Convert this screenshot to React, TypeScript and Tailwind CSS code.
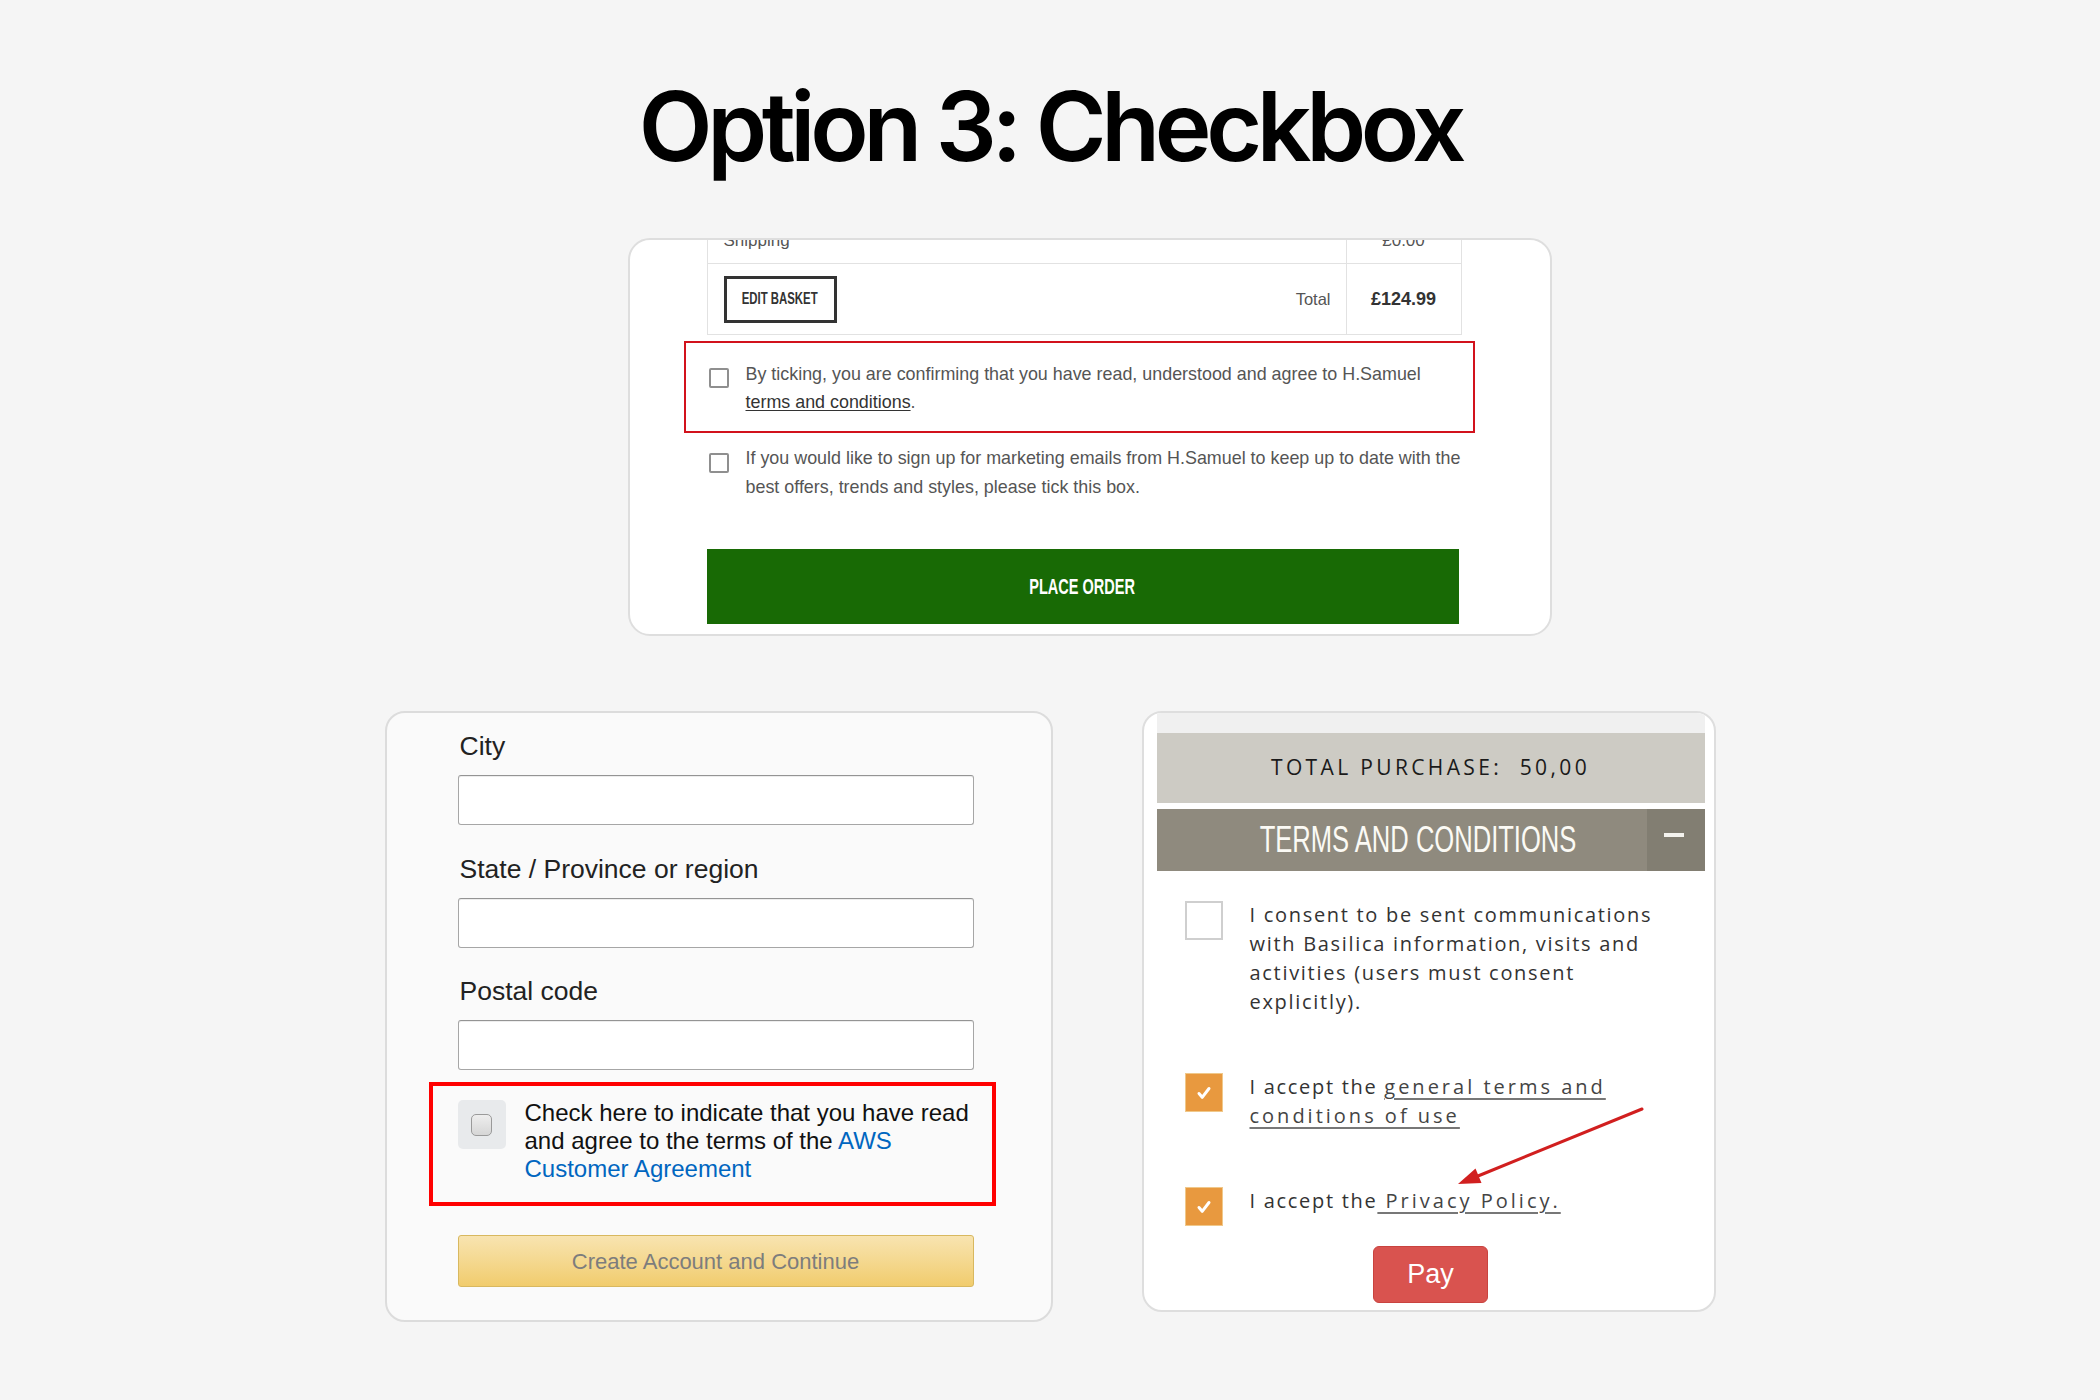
import type { ReactNode } from "react";

const sans = "font-['Liberation_Sans',Arial,sans-serif]";
const openSans = "font-['Open_Sans','Noto_Sans',sans-serif]";

function Condensed({ children, className }: { children: ReactNode; className?: string }) {
  // squeezed caps used for the shop buttons and the accordion header
  return <span className={`inline-block whitespace-nowrap ${className ?? ""}`}>{children}</span>;
}

function OrderCard() {
  return (
    <section className="ml-[243px] h-[398px] w-[924px] overflow-hidden rounded-[22px] border-2 border-[#dedede] bg-white">
      <div className={`-mt-[29px] ml-[77px] w-[755px] ${sans}`}>
        <div className="border-x border-b border-[#e2e2e2]">
          <div className="flex h-[53px] border-b border-[#e2e2e2]">
            <div className="flex flex-1 items-center pl-[16px] pt-[8px] text-[17px] text-[#555]">Shipping</div>
            <div className="flex w-[115px] items-center justify-center border-l border-[#e2e2e2] pt-[8px] text-[17px] text-[#555]">
              £0.00
            </div>
          </div>
          <div className="flex h-[70px]">
            <div className="flex flex-1 items-center justify-between pl-[16px] pr-[15px]">
              <div className="flex h-[47px] w-[113px] items-center justify-center border-[3px] border-[#333]">
                <Condensed className="scale-x-[0.67] text-[17px] font-bold text-[#333]">EDIT BASKET</Condensed>
              </div>
              <span className="text-[16.5px] text-[#555]">Total</span>
            </div>
            <div className="flex w-[115px] items-center justify-center border-l border-[#e2e2e2] text-[18px] font-bold text-[#333]">
              £124.99
            </div>
          </div>
        </div>

        <div className="-ml-[23px] mt-[6px] h-[92px] w-[791px] border-2 border-[#d2121c] pl-[23px] pt-[17px]">
          <div className="flex gap-[17px]">
            <span className="mt-[8px] h-[20px] w-[20px] shrink-0 rounded-[2px] border-2 border-[#8f8f8f] bg-white" />
            <p className="whitespace-nowrap text-[17.9px] leading-[28px] text-[#555]">
              By ticking, you are confirming that you have read, understood and agree to H.Samuel
              <br />
              <span className="text-[#333] underline underline-offset-2">terms and conditions</span>.
            </p>
          </div>
        </div>

        <div className="ml-[2px] mt-[11px] flex gap-[17px]">
          <span className="mt-[9px] h-[20px] w-[20px] shrink-0 rounded-[2px] border-2 border-[#8f8f8f] bg-white" />
          <p className="whitespace-nowrap text-[17.9px] leading-[29px] text-[#555]">
            If you would like to sign up for marketing emails from H.Samuel to keep up to date with the
            <br />
            best offers, trends and styles, please tick this box.
          </p>
        </div>

        <button
          type="button"
          className="mt-[47px] flex h-[75px] w-[752px] items-center justify-center bg-[#186a05]"
        >
          <Condensed className="scale-x-[0.66] text-[22px] font-bold text-white">PLACE ORDER</Condensed>
        </button>
      </div>
    </section>
  );
}

function Field({ label, className }: { label: string; className?: string }) {
  return (
    <div className={className}>
      <label className="ml-[2px] block text-[26.5px] leading-[32px] text-[#222]">{label}</label>
      <input
        type="text"
        className="mt-[13px] block h-[50px] w-[516px] rounded-[3px] border border-[#a6a6a6] border-t-[#949494] bg-white shadow-[inset_0_1px_0_rgba(0,0,0,0.07)]"
      />
    </div>
  );
}

function AccountCard() {
  return (
    <section
      className={`h-[611px] w-[668px] shrink-0 rounded-[20px] border-2 border-[#dcdcdc] bg-[#fafafa] pl-[71px] pt-[17px] ${sans}`}
    >
      <Field label="City" />
      <Field label="State / Province or region" className="mt-[28px]" />
      <Field label="Postal code" className="mt-[27px]" />

      <div className="-ml-[29px] mt-[12px] h-[124px] w-[567px] border-4 border-[#ff0000] pl-[25px] pt-[14px]">
        <div className="flex">
          <div className="flex h-[49px] w-[48px] shrink-0 items-center justify-center rounded-[5px] bg-[#e8eaec]">
            <span className="h-[22px] w-[21px] rounded-[5px] border border-[#9a9a9a] bg-gradient-to-b from-[#eeeeee] to-[#d6d6d6]" />
          </div>
          <p className="-mt-[1px] ml-[19px] text-[24px] leading-[28px] text-[#111]">
            Check here to indicate that you have read and agree to the terms of the{" "}
            <a className="text-[#0066c0]">AWS Customer Agreement</a>
          </p>
        </div>
      </div>

      <button
        type="button"
        className="mt-[29px] flex h-[52px] w-[516px] items-center justify-center rounded-[3px] border border-[#d8b85f] bg-gradient-to-b from-[#f8e4b0] to-[#f1cc6c] text-[22px] text-[#7d7d7d]"
      >
        Create Account and Continue
      </button>
    </section>
  );
}

function Tick() {
  return (
    <span className="flex h-[39px] w-[38px] shrink-0 items-center justify-center border border-[#f0c88a] bg-[#e8993f]">
      <svg width="16" height="16" viewBox="0 0 16 16" fill="none">
        <path d="M3 8.5l3.2 3.8L13 3.5" stroke="#fff" strokeWidth="3" strokeLinecap="round" strokeLinejoin="round" />
      </svg>
    </span>
  );
}

function TermsCard() {
  const link = "tracking-[0.15em] text-[#444] underline decoration-[#777] underline-offset-[4px]";
  return (
    <section className="relative h-[601px] w-[574px] shrink-0 overflow-hidden rounded-[20px] border-2 border-[#dedede] bg-white">
      <div className="ml-[13px] mr-[9px]">
        <div className="h-[20px] bg-[#f0f0f0]" />
        <div
          className={`flex h-[70px] items-center justify-center bg-[#cdcbc4] text-[21px] tracking-[0.16em] text-[#1a1a1a] ${openSans}`}
        >
          TOTAL PURCHASE:&nbsp;&nbsp;50,00
        </div>
        <div className="mt-[6px] flex h-[62px] bg-[#8f8a7e]">
          <div className="flex flex-1 items-center justify-center pl-[34px]">
            <Condensed className={`scale-x-[0.71] text-[36px] leading-none text-[#fbfaf5] ${sans}`}>
              TERMS AND CONDITIONS
            </Condensed>
          </div>
          <div className="flex w-[58px] justify-center bg-[#827e72] pr-[4px] pt-[24px]">
            <span className="h-[4px] w-[20px] bg-[#f4f3ee]" />
          </div>
        </div>
      </div>

      <div className={`pl-[41px] text-[20px] tracking-[0.085em] text-[#333] ${openSans}`}>
        <div className="mt-[30px] flex gap-[27px]">
          <span className="h-[39px] w-[38px] shrink-0 border-2 border-[#cfcfcf] bg-white" />
          <p className="-mt-[1px] whitespace-nowrap leading-[29px]">
            I consent to be sent communications
            <br />
            with Basilica information, visits and
            <br />
            activities (users must consent
            <br />
            explicitly).
          </p>
        </div>

        <div className="mt-[57px] flex gap-[27px]">
          <Tick />
          <p className="-mt-[1px] whitespace-nowrap leading-[29px]">
            I accept the{" "}
            <a className={link}>
              general terms and
              <br />
              conditions of use
            </a>
          </p>
        </div>

        <div className="mt-[57px] flex gap-[27px]">
          <Tick />
          <p className="-mt-[1px] whitespace-nowrap leading-[29px]">
            I accept the
            <a className={link}> Privacy Policy.</a>
          </p>
        </div>
      </div>

      <div className="mt-[20px] flex justify-center pl-[4px]">
        <button
          type="button"
          className={`flex h-[57px] w-[115px] items-center justify-center rounded-[6px] border border-[#c9433f] bg-[#d9534f] text-[27px] text-white ${sans}`}
        >
          Pay
        </button>
      </div>

      {/* red pointer drawn over the consent list */}
      <svg className="pointer-events-none absolute inset-0" width="570" height="597" viewBox="0 0 570 597">
        <line x1="498" y1="396" x2="334" y2="463" stroke="#d11f1f" strokeWidth="3" strokeLinecap="round" />
        <polygon points="314,471 337.5,470 331.5,455.5" fill="#d11f1f" />
      </svg>
    </section>
  );
}

export default function App() {
  return (
    <div className={`flex min-h-[1400px] w-full flex-col items-center bg-[#f5f5f5] ${sans}`}>
      <h1 className="mt-[78px] font-['Inter',sans-serif] text-[96px] font-semibold leading-none tracking-[-0.055em] text-black">
        Option 3: Checkbox
      </h1>
      <div className="mt-[64px] flex w-[1331px] flex-col">
        <OrderCard />
        <div className="mt-[75px] flex items-start gap-[89px]">
          <AccountCard />
          <TermsCard />
        </div>
      </div>
    </div>
  );
}
